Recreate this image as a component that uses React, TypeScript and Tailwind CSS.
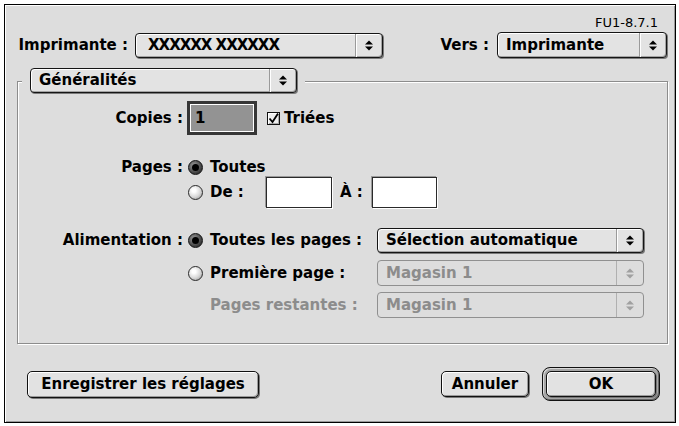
import React from "react";

function Arrows({ disabled }: { disabled?: boolean }) {
  const c = disabled ? "#a0a0a0" : "#000";
  return (
    <svg width="8" height="11" viewBox="0 0 8 11">
      <polygon points="0,4.5 4,0.5 8,4.5" fill={c} />
      <polygon points="0,6.5 8,6.5 4,10.5" fill={c} />
    </svg>
  );
}

function Popup({
  text,
  className,
  disabled,
  textClass = "",
}: {
  text: string;
  className: string;
  disabled?: boolean;
  textClass?: string;
}) {
  const box = disabled
    ? "border-[#909090] bg-[#dddddd] text-[#8c8c8c]"
    : "border-[#151515] bg-[#e3e3e3] text-black shadow-[inset_1px_1px_0_#ffffff,inset_-1px_-1px_0_#a4a4a4,1px_1px_0_#7a7a7a]";
  const div = disabled
    ? "border-[#b0b0b0]"
    : "border-[#9a9a9a] shadow-[inset_1px_0_0_#ffffff]";
  return (
    <div className={`flex border rounded-[4px] ${box} ${className}`}>
      <div className={`flex-1 flex items-center pl-[8px] whitespace-nowrap overflow-hidden ${textClass}`}>{text}</div>
      <div className={`w-[27px] flex items-center justify-center border-l ${div}`}>
        <Arrows disabled={disabled} />
      </div>
    </div>
  );
}

function Radio({ on }: { on?: boolean }) {
  return on ? (
    <div className="w-[15px] h-[15px] shrink-0 rounded-full border border-[#111] bg-[radial-gradient(circle_at_38%_35%,#9a9a9a,#3a3a3a_70%)] flex items-center justify-center">
      <div className="w-[7px] h-[7px] rounded-full bg-black" />
    </div>
  ) : (
    <div className="w-[15px] h-[15px] shrink-0 rounded-full border border-[#2a2a2a] bg-[radial-gradient(circle_at_38%_35%,#ffffff_15%,#d8d8d8_55%,#8a8a8a)]" />
  );
}

function Field({ className }: { className: string }) {
  return (
    <div className={`bg-white border border-[#2a2a2a] shadow-[-1px_-1px_0_#9a9a9a,1px_1px_0_#ffffff] ${className}`} />
  );
}

const btn =
  "flex items-center justify-center border border-[#111] rounded-[5px] bg-[#e2e2e2] shadow-[inset_1px_1px_0_#ffffff,inset_-1px_-1px_0_#9a9a9a,1px_1px_0_#777777]";

export default function App() {
  return (
    <div className="w-[679px] h-[426px] bg-white font-['DejaVu_Sans',sans-serif] text-black overflow-hidden">
      <div className="ml-[4px] mt-[4px] w-[672px] h-[419px] border border-black bg-[#dddddd] shadow-[inset_1px_1px_0_#ffffff,inset_-1px_-1px_0_#9a9a9a] flex flex-col">
        <div className="pt-[10px] pr-[17px] text-right text-[13px] leading-[15px]">FU1-8.7.1</div>

        <div className="mt-[2px] flex items-center h-[26px] text-[15px] font-bold">
          <div className="w-[123px] text-right whitespace-nowrap">Imprimante :</div>
          <Popup className="ml-[7px] w-[248px] h-[25px]" text="XXXXXX XXXXXX" textClass="tracking-[-1px] pl-[12px]" />
          <div className="w-[106px] text-right whitespace-nowrap">Vers :</div>
          <Popup className="ml-[8px] w-[170px] h-[26px]" text="Imprimante" />
        </div>

        <div className="relative mt-[23px] ml-[12px] w-[651px] h-[263px] border border-[#8c8c8c] shadow-[inset_1px_1px_0_#ffffff,1px_1px_0_#ffffff] text-[15px] font-bold">
          <div className="absolute left-[4px] top-[-14px] px-[8px] bg-[#dddddd]">
            <Popup className="w-[267px] h-[25px]" text="Généralités" />
          </div>

          <div className="flex flex-col pt-[19px]">
            <div className="flex items-center h-[34px]">
              <div className="w-[165px] text-right whitespace-nowrap">Copies :</div>
              <div className="ml-[4px] w-[70px] h-[34px] bg-[#363636] p-[3px]">
                <div className="h-full border border-white bg-[#939393] pl-[4px] flex items-center">1</div>
              </div>
              <div className="ml-[10px] w-[13px] h-[13px] border border-[#111] bg-[#eeeeee] shadow-[inset_1px_1px_0_#ffffff,inset_-1px_-1px_0_#aaaaaa] flex items-center justify-center">
                <svg width="11" height="11" viewBox="0 0 11 11">
                  <path d="M1.5 5.5 L4.5 9 L10 0.5" stroke="#000" strokeWidth="1.8" fill="none" />
                </svg>
              </div>
              <div className="ml-[4px]">Triées</div>
            </div>

            <div className="flex items-center h-[19px] mt-[23px]">
              <div className="w-[165px] text-right whitespace-nowrap">Pages :</div>
              <div className="ml-[5px]"><Radio on /></div>
              <div className="ml-[7px]">Toutes</div>
            </div>

            <div className="flex items-center h-[31px]">
              <div className="w-[165px]" />
              <div className="ml-[5px]"><Radio /></div>
              <div className="ml-[7px] w-[56px] whitespace-nowrap">De :</div>
              <Field className="w-[66px] h-[31px]" />
              <div className="ml-[8px] w-[32px] whitespace-nowrap">À :</div>
              <Field className="w-[65px] h-[31px]" />
            </div>

            <div className="flex items-center h-[25px] mt-[20px]">
              <div className="w-[165px] text-right whitespace-nowrap">Alimentation :</div>
              <div className="ml-[5px]"><Radio on /></div>
              <div className="ml-[7px] w-[167px] whitespace-nowrap">Toutes les pages :</div>
              <Popup className="w-[267px] h-[25px]" text="Sélection automatique" />
            </div>

            <div className="flex items-center h-[26px] mt-[7px]">
              <div className="w-[165px]" />
              <div className="ml-[5px]"><Radio /></div>
              <div className="ml-[7px] w-[167px] whitespace-nowrap">Première page :</div>
              <Popup className="w-[267px] h-[26px]" text="Magasin 1" disabled />
            </div>

            <div className="flex items-center h-[26px] mt-[6px]">
              <div className="w-[165px]" />
              <div className="ml-[27px] w-[167px] whitespace-nowrap text-[#8c8c8c]">Pages restantes :</div>
              <Popup className="w-[267px] h-[26px]" text="Magasin 1" disabled />
            </div>
          </div>
        </div>

        <div className="mt-[23px] h-[34px] flex items-center pl-[22px] pr-[15px] text-[15px] font-bold">
          <div className={`${btn} w-[232px] h-[27px]`}>Enregistrer les réglages</div>
          <div className="flex-1" />
          <div className={`${btn} w-[88px] h-[26px]`}>Annuler</div>
          <div className="ml-[13px] w-[118px] h-[34px] rounded-[8px] border border-[#111] bg-[#a6a6a6] p-[3px] shadow-[inset_1px_1px_0_#d8d8d8,inset_-1px_-1px_0_#666666]">
            <div className={`${btn} w-full h-full`}>OK</div>
          </div>
        </div>
      </div>
    </div>
  );
}
